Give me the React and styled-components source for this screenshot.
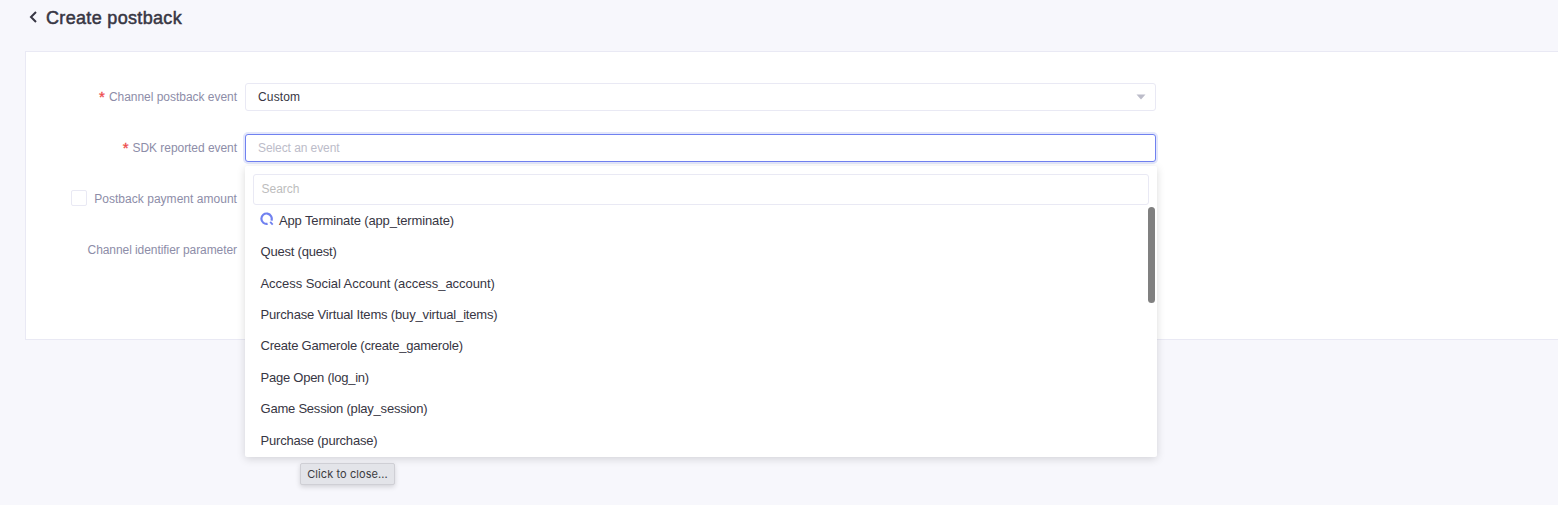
import React from 'react';
import styled, { createGlobalStyle } from 'styled-components';

const colors = {
    page: '#f7f7fc',
    text: '#373643',
    label: '#8d8da8',
    placeholder: '#bcbcc9',
    search: '#bdbdbd',
    line: '#e9e9f4',
    primary: '#7081f0',
    required: '#ee4b4b',
    scroll: '#808080',
};

const GlobalStyle = createGlobalStyle`
    * {
        box-sizing: border-box;
    }
    html, body {
        margin: 0;
        height: 505px;
        overflow: hidden;
        background: ${colors.page};
    }
    body {
        font-family: 'Liberation Sans', Arial, sans-serif;
        font-size: 12px;
        color: ${colors.text};
    }
`
const Page = styled.div`
    height: 505px;
    padding-left: 25px;
    overflow: hidden;
`
const Header = styled.header`
    display: flex;
    align-items: center;
    height: 51px;
    padding: 0 0 15px 4px;
`
const BackIcon = styled.svg`
    width: 8px;
    height: 12px;
    margin-top: -2px;
`
const Title = styled.h1`
    margin: 0 0 0 9px;
    font-size: 18px;
    line-height: 24px;
    font-weight: 400;
    -webkit-text-stroke: 0.5px ${colors.text};
    letter-spacing: 0.33px;
`
const Card = styled.main`
    display: flex;
    flex-direction: column;
    gap: 23px;
    height: 289px;
    padding-top: 31px;
    background: #fff;
    border: 1px solid ${colors.line};
    border-right: none;
`
const Row = styled.div`
    display: flex;
    align-items: center;
    height: 28px;
`
const Label = styled.label`
    display: flex;
    align-items: center;
    justify-content: flex-end;
    width: 211px;
    margin-right: 8px;
    color: ${colors.label};
    white-space: nowrap;
    letter-spacing: ${props => props.$spacing || 'normal'};
`
const Required = styled.span`
    margin-right: 4px;
    font-size: 15px;
    line-height: 12px;
    height: 13px;
    color: ${colors.required};
    -webkit-text-stroke: 0.3px ${colors.required};
`
const Checkbox = styled.span`
    width: 16px;
    height: 16px;
    margin: -2px 7px 0 0;
    background: #fff;
    border: 1px solid ${colors.line};
    border-radius: 2px;
`
const Field = styled.div`
    position: relative;
    width: 911px;
`
const Select = styled.div`
    display: flex;
    align-items: center;
    justify-content: space-between;
    height: 28px;
    padding: 0 9px 0 12px;
    background: #fff;
    border: 1px solid ${props => props.$open ? colors.primary : colors.line};
    border-radius: 3px;
    color: ${props => props.$open ? colors.placeholder : colors.text};
    ${props => props.$open && 'box-shadow: 0 0 0 2px #e3e7fb;'};
`
const Text = styled.span`
    white-space: pre;
    letter-spacing: ${props => props.$spacing || 'normal'};
`
const Dropdown = styled.div`
    position: absolute;
    z-index: 2;
    top: 32px;
    left: 0;
    width: 912px;
    height: 291px;
    padding: 8px 8px 0;
    background: #fff;
    border-radius: 2px;
    box-shadow: 0 2px 8px rgba(0, 0, 0, 0.15);
`
const Search = styled.div`
    display: flex;
    align-items: center;
    height: 31px;
    padding: 0 0 2px 7.5px;
    border: 1px solid ${colors.line};
    border-radius: 3px;
    color: ${colors.search};
`
const Options = styled.ul`
    margin: -0.5px 0 0;
    padding: 0;
    height: 252px;
    overflow: hidden;
    list-style: none;
`
const Option = styled.li`
    display: flex;
    align-items: center;
    height: 31.45px;
    padding-left: 7.5px;
    font-size: 13px;
`
const EventIcon = styled.svg`
    width: 14px;
    height: 14px;
    margin: -2px 5px 0 -0.5px;
`
const ScrollThumb = styled.div`
    position: absolute;
    top: 41px;
    right: 2px;
    width: 7px;
    height: 96px;
    border-radius: 4px;
    background: ${colors.scroll};
`
const Tooltip = styled.div`
    position: absolute;
    z-index: 3;
    top: 329px;
    left: 55px;
    display: flex;
    align-items: center;
    justify-content: center;
    width: 95px;
    height: 22px;
    background: #e3e4e9;
    border: 1px solid #cfcfd5;
    border-radius: 2px;
    box-shadow: 0 2px 5px rgba(0, 0, 0, 0.15);
    font-family: Inter, sans-serif;
    font-size: 11px;
    letter-spacing: 0.08px;
    color: #3b3b40;
`

const events = [
    { name: 'App Terminate (app_terminate)', spacing: '-0.14px', preset: true },
    { name: 'Quest (quest)', spacing: '-0.2px' },
    { name: 'Access Social Account (access_account)', spacing: '-0.05px' },
    { name: 'Purchase Virtual Items (buy_virtual_items)', spacing: '-0.165px' },
    { name: 'Create Gamerole (create_gamerole)', spacing: '-0.22px' },
    { name: 'Page Open (log_in)', spacing: '-0.24px' },
    { name: 'Game Session (play_session)', spacing: '-0.22px' },
    { name: 'Purchase (purchase)', spacing: '-0.2px' },
];

const EventDropdown = () => (
    <Dropdown>
        <Search><Text>Search</Text></Search>
        <Options>
            {events.map(event => (
                <Option key={event.name}>
                    {event.preset && (
                        <EventIcon viewBox="0 0 14 14" fill="none" stroke={colors.primary}>
                            <path d="M7.6 11.8A5.2 5.2 0 1 1 11.4 8.6" strokeWidth="2.2"/>
                            <path d="M10.2 9.8L12.7 12.6" strokeWidth="1.8"/>
                        </EventIcon>
                    )}
                    <Text $spacing={event.spacing}>{event.name}</Text>
                </Option>
            ))}
        </Options>
        <ScrollThumb/>
    </Dropdown>
)

const App = () => {
    return(
        <Page>
            <GlobalStyle/>
            <Header>
                <BackIcon viewBox="0 0 8 12" fill="none" stroke={colors.text} strokeWidth="2">
                    <path d="M7 1L2 6L7 11"/>
                </BackIcon>
                <Title>Create postback</Title>
            </Header>
            <Card>
                <Row>
                    <Label $spacing="-0.03px"><Required>*</Required>Channel postback event</Label>
                    <Field>
                        <Select>
                            <Text $spacing="0.15px">Custom</Text>
                            <svg width="10" height="6" viewBox="0 0 10 6"><path d="M0.5 0.5H9.5L5 5.5Z" fill="#bcbcc9"/></svg>
                        </Select>
                    </Field>
                </Row>
                <Row>
                    <Label $spacing="-0.05px"><Required>*</Required>SDK reported event</Label>
                    <Field>
                        <Select $open><Text $spacing="-0.08px">Select an event</Text></Select>
                        <EventDropdown/>
                        <Tooltip>Click to close...</Tooltip>
                    </Field>
                </Row>
                <Row>
                    <Label $spacing="0.03px"><Checkbox/>Postback payment amount</Label>
                </Row>
                <Row>
                    <Label $spacing="-0.07px">Channel identifier parameter</Label>
                </Row>
            </Card>
        </Page>
    )
}

export default App;
